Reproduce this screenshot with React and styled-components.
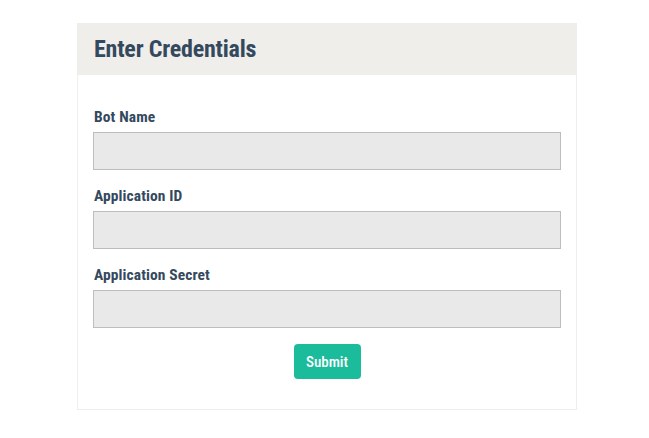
import React from "react";
import styled, { createGlobalStyle } from "styled-components";

const Global = createGlobalStyle`
  html, body { margin: 0; padding: 0; background: #ffffff; }
  body { font-family: Roboto, "Liberation Sans", sans-serif; font-stretch: 75%; }
`;

const Page = styled.div`
  display: flex;
  justify-content: center;
  padding-top: 23px;
  padding-left: 5px;
`;

const Card = styled.div`
  width: 500px;
  box-sizing: border-box;
  border: 1px solid #eeeeee;
  border-top: none;
  background: #fff;
`;

const Header = styled.div`
  height: 52px;
  box-sizing: border-box;
  margin: 0 -1px;
  background: #efeeea;
  padding: 0 17px;
  display: flex;
  align-items: center;
`;

const Title = styled.h2`
  margin: 0;
  font-size: 24px;
  font-weight: 700;
  font-stretch: 75%;
  letter-spacing: -0.2px;
  color: #34495e;
`;

const Body = styled.form`
  padding: 32px 15px 30px 15px;
  display: flex;
  flex-direction: column;
`;

const Group = styled.div`
  display: flex;
  flex-direction: column;
  margin-bottom: 16px;
`;

const Label = styled.label`
  font-size: 15.5px;
  font-weight: 700;
  font-stretch: 75%;
  letter-spacing: 0.1px;
  line-height: 20px;
  color: #34495e;
  margin-bottom: 5px;
  padding-left: 1px;
`;

const Input = styled.input`
  height: 38px;
  box-sizing: border-box;
  width: 100%;
  background: #e9e9e9;
  border: 1px solid #bdbdbd;
  border-radius: 0;
  outline: none;
  font-family: inherit;
`;

const Actions = styled.div`
  display: flex;
  justify-content: center;
`;

const Button = styled.button`
  width: 67px;
  height: 35px;
  padding: 0;
  background: #1abc9c;
  color: #ffffff;
  border: none;
  border-radius: 4px;
  font-family: Roboto, "Liberation Sans", sans-serif;
  font-stretch: 75%;
  font-weight: 500;
  font-size: 15px;
  cursor: pointer;
`;

export default function App() {
  return (
    <>
      <Global />
      <Page>
        <Card>
          <Header>
            <Title>Enter Credentials</Title>
          </Header>
          <Body onSubmit={(e) => e.preventDefault()}>
            <Group>
              <Label>Bot Name</Label>
              <Input type="text" />
            </Group>
            <Group>
              <Label>Application ID</Label>
              <Input type="text" />
            </Group>
            <Group>
              <Label>Application Secret</Label>
              <Input type="text" />
            </Group>
            <Actions>
              <Button type="submit">Submit</Button>
            </Actions>
          </Body>
        </Card>
      </Page>
    </>
  );
}
